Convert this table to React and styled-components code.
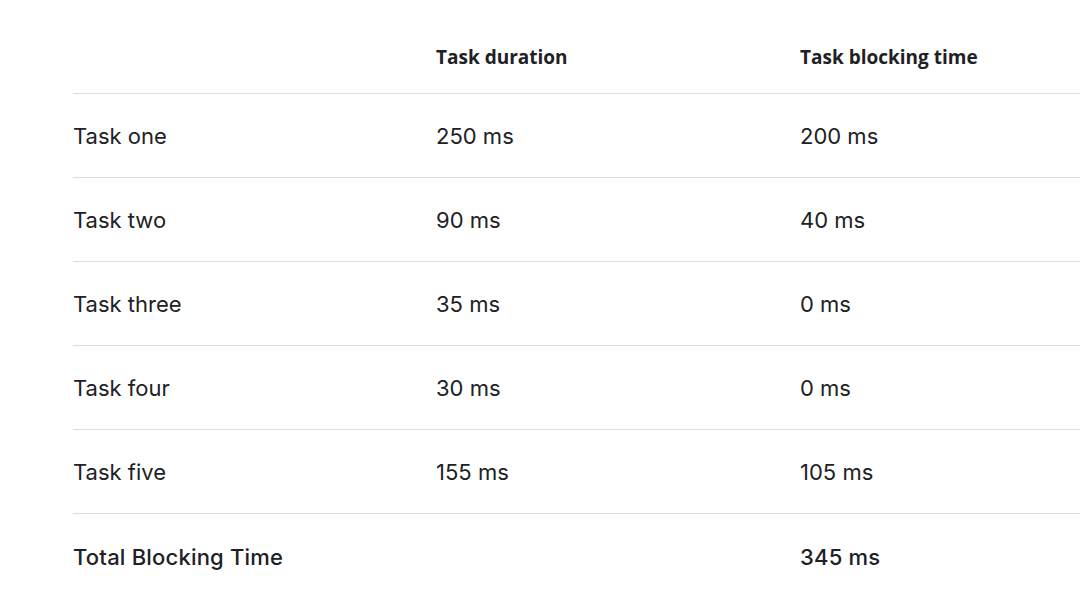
import React from "react";
import styled, { createGlobalStyle } from "styled-components";

const GlobalStyle = createGlobalStyle`
  html, body {
    margin: 0;
    padding: 0;
    background: #fff;
  }
  body {
    font-family: Inter, "Noto Sans", sans-serif;
    color: #1f1f1f;
  }
`;

const Table = styled.div`
  margin-left: 73px;
  display: flex;
  flex-direction: column;
`;

const Row = styled.div`
  display: grid;
  grid-template-columns: 363px 364px 1fr;
  align-items: center;
  height: ${(p) => (p.$head ? "94px" : "84px")};
  box-sizing: border-box;
  padding-top: 1px;
  border-bottom: ${(p) => (p.$last ? "none" : "1px solid #dadce0")};
  ${(p) => p.$head && "align-items: end; padding-bottom: 24px;"}
`;

const HeadCell = styled.div`
  font-family: "Open Sans", Roboto, sans-serif;
  font-weight: 700;
  font-size: 19px;
  line-height: 24px;
  color: #202124;
`;

const Cell = styled.div`
  font-size: 22px;
  line-height: 28px;
  font-weight: ${(p) => (p.$strong ? 500 : 400)};
  color: #202124;
  letter-spacing: ${(p) => (p.$strong ? "0.2px" : "0")};
`;

const rows = [
  ["Task one", "250 ms", "200 ms"],
  ["Task two", "90 ms", "40 ms"],
  ["Task three", "35 ms", "0 ms"],
  ["Task four", "30 ms", "0 ms"],
  ["Task five", "155 ms", "105 ms"],
];

export default function App() {
  return (
    <>
      <GlobalStyle />
      <Table>
        <Row $head>
          <HeadCell />
          <HeadCell>Task duration</HeadCell>
          <HeadCell>Task blocking time</HeadCell>
        </Row>
        {rows.map((r) => (
          <Row key={r[0]}>
            <Cell>{r[0]}</Cell>
            <Cell>{r[1]}</Cell>
            <Cell>{r[2]}</Cell>
          </Row>
        ))}
        <Row $last>
          <Cell $strong>Total Blocking Time</Cell>
          <Cell />
          <Cell $strong>345 ms</Cell>
        </Row>
      </Table>
    </>
  );
}
